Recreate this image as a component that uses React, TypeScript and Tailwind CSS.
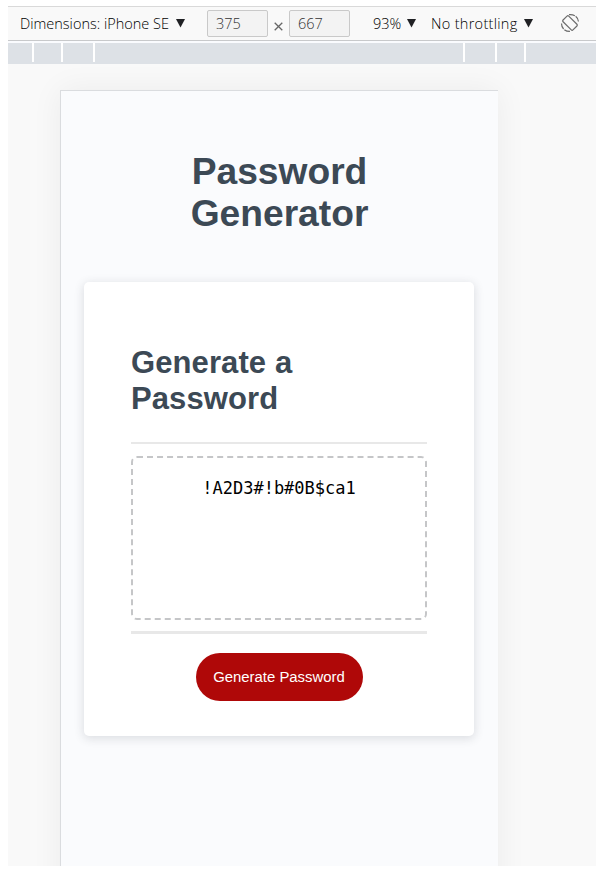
import React from "react";

function Caret() {
  return (
    <svg viewBox="0 0 9 9" className="h-[9px] w-[9px] shrink-0" fill="#202124">
      <path d="M0 0H9L4.5 8.5Z" />
    </svg>
  );
}

function SizeField({ value }: { value: string }) {
  return (
    <div className="flex h-[27px] w-[61px] shrink-0 items-center rounded-[2px] border border-[#c9c9c9] bg-[#f3f3f3] pt-px pl-[8px] text-[#333]">
      {value}
    </div>
  );
}

function Toolbar() {
  return (
    <div className="flex h-[35px] items-center border-y border-t-[#d9d9d9] border-b-[#c8c9cb] bg-[#f9f9f9] pl-3 font-['Open_Sans','Noto_Sans',sans-serif] text-[14.5px] leading-none font-light whitespace-nowrap text-black">
      <span className="w-[156px] shrink-0 pt-[2px]">Dimensions: iPhone SE</span>
      <Caret />
      <div className="ml-[22px] flex items-center">
        <SizeField value="375" />
        <svg viewBox="0 0 9 9" className="mx-[6px] mt-[6px] h-[9px] w-[9px]" stroke="#666" strokeWidth="1.3">
          <path d="M.7 .7L8.3 8.3M8.3 .7L.7 8.3" />
        </svg>
        <SizeField value="667" />
      </div>
      <span className="ml-[23px] w-[34px] shrink-0 pt-[2px]">93%</span>
      <Caret />
      <span className="ml-[15px] w-[93px] shrink-0 pt-[2px] tracking-[0.3px]">No throttling</span>
      <Caret />
      <svg viewBox="0 0 20 20" className="mb-[2px] ml-[27px] h-5 w-5 shrink-0" fill="none" stroke="#6b6b6b" strokeWidth="1.2">
        <rect x="6" y="3" width="8" height="14" rx="1.2" transform="rotate(-45 10 10)" />
        <path d="M9 1.6C14.5 1 18.5 4.500 18.500 9.500M1.500 10.500C1.500 15.500 5.500 19 11 18.400" strokeDasharray="6 1" />
      </svg>
    </div>
  );
}

function Ruler() {
  return (
    <div className="flex h-[21px] bg-[#dde1e6]">
      <div className="h-[19px] w-[26px] border-r-2 border-white" />
      <div className="h-[19px] w-[29px] border-r-2 border-white" />
      <div className="h-[19px] w-[32px] border-r-2 border-white" />
      <div className="h-[19px] w-[370px] border-r-2 border-white" />
      <div className="h-[19px] w-[32px] border-r-2 border-white" />
      <div className="h-[19px] w-[29px] border-r-2 border-white" />
    </div>
  );
}

function GeneratorCard() {
  return (
    <section className="mt-[48px] ml-[23px] h-[454px] w-[390px] rounded-[5px] bg-white px-[47px] pt-[63px] shadow-[0_2px_10px_1px_rgba(50,60,70,0.14)]">
      <h2 className="text-[31px] leading-[36px] font-bold tracking-[0.1px] whitespace-nowrap">
        Generate a
        <br />
        Password
      </h2>
      <div className="mt-[25px] h-[2px] bg-[#e8e8e8]" />
      <div className="mt-[12px] h-[164px] rounded-[6px] border-2 border-dashed border-[#c5c6c8] pt-[20px] text-center font-['DejaVu_Sans_Mono',monospace] text-[17px] leading-[20px] text-black">
        !A2D3#!b#0B$ca1
      </div>
      <div className="mt-[11px] h-[3px] bg-[#e8e8e8]" />
      <button className="mx-auto mt-[19px] flex h-[48px] w-[167px] items-center justify-center rounded-full bg-[#af0808] text-[14.9px] whitespace-nowrap text-white">
        Generate Password
      </button>
    </section>
  );
}

export default function App() {
  return (
    <div className="h-[886px] w-[598px] overflow-hidden bg-white pt-[6px] pl-2">
      <div className="h-[860px] w-[588px] overflow-hidden bg-[#f9f9f9]">
        <Toolbar />
        <div className="h-[2px] bg-[#fafbfe]" />
        <Ruler />
        <div className="h-[802px] overflow-hidden">
          <main className="mt-[26px] ml-[52px] h-[830px] w-[438px] border-t border-l border-[#dadcdf] bg-[#fafbfd] pt-[59px] font-['Liberation_Sans',Arial,sans-serif] text-[#3c4955] shadow-[0_0_30px_rgba(0,0,0,0.06)]">
            <h1 className="text-center text-[37.2px] leading-[42px] font-bold">
              Password
              <br />
              Generator
            </h1>
            <GeneratorCard />
          </main>
        </div>
      </div>
    </div>
  );
}
